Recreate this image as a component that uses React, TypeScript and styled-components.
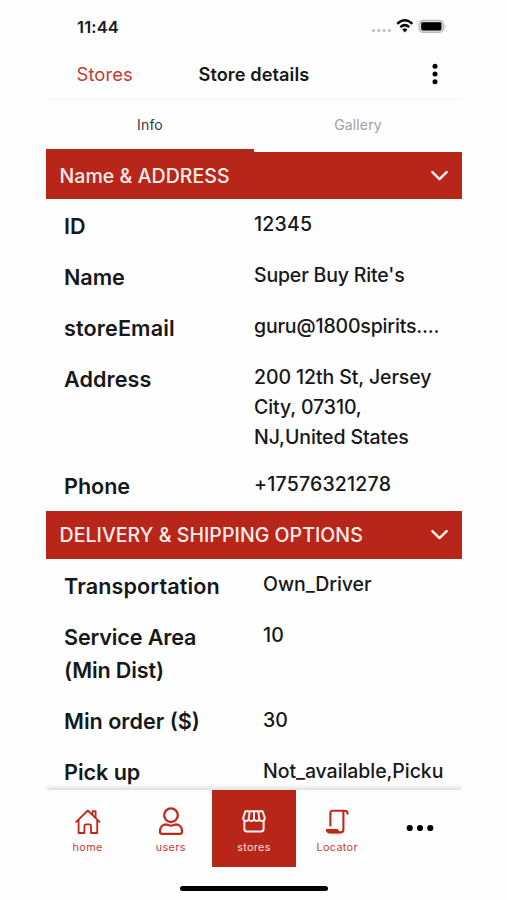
import React from "react";
import styled, { createGlobalStyle } from "styled-components";

const RED = "#b82619";

const Global = createGlobalStyle`
  * { box-sizing: border-box; }
  body { margin: 0; background: #fefefe; font-family: Inter, "Liberation Sans", sans-serif; color: #17181a; }
`;

const Phone = styled.div`
  width: 416px;
  height: 900px;
  margin-left: 46px;
  display: flex;
  flex-direction: column;
  overflow: hidden;
`;

const StatusBar = styled.div`
  height: 50px;
  flex: none;
  display: flex;
  justify-content: space-between;
  align-items: center;
  padding: 3px 16px 0 31px;
`;

const Clock = styled.span`
  font-size: 16.4px;
  font-weight: 600;
  letter-spacing: 0.2px;
`;

const StatusIcons = styled.svg`
  display: block;
`;

const Header = styled.header`
  height: 50px;
  flex: none;
  display: grid;
  grid-template-columns: 122px 1fr 20px;
  align-items: center;
  padding: 0 17px 0 30.5px;
  border-bottom: 2px solid #f8f8f8;
`;

const BackLink = styled.a`
  color: #c43c31;
  font-size: 18.4px;
  letter-spacing: 0.1px;
`;

const Title = styled.h1`
  margin: 0;
  font-size: 18.2px;
  font-weight: 600;
  letter-spacing: 0.07px;
`;

const MenuDots = styled.svg`
  display: block;
  justify-self: center;
`;

const Tabs = styled.div`
  height: 52px;
  flex: none;
  display: flex;
`;

const Tab = styled.button<{ $active?: boolean }>`
  flex: 1;
  border: 0;
  padding: 0;
  background: none;
  font: 400 14px Inter, sans-serif;
  letter-spacing: 0.15px;
  color: ${(p) => (p.$active ? "#37383a" : "#a0a0a0")};
  border-bottom: 3px solid ${(p) => (p.$active ? RED : "transparent")};
`;

const Content = styled.main`
  height: 638px;
  flex: none;
  overflow: hidden;
`;

const SectionHeader = styled.div<{ $height: number }>`
  height: ${(p) => p.$height}px;
  display: flex;
  align-items: center;
  justify-content: space-between;
  padding: 0 13px 0 13.5px;
  background: ${RED};
  color: #fdeeec;
`;

const SectionTitle = styled.h2`
  margin: 0;
  font-size: 19.5px;
  font-weight: 500;
  white-space: nowrap;
  letter-spacing: 0.06px;
`;

const Rows = styled.div`
  padding-top: 1px;
`;

const Row = styled.div<{ $valueIndent?: boolean }>`
  display: grid;
  grid-template-columns: ${(p) => (p.$valueIndent ? 199 : 190)}px 1fr;
  padding: 9px 18px 7px;
`;

const Label = styled.div<{ $spacing: number }>`
  padding: 0.5px 0 1px;
  font-size: 21.6px;
  line-height: 33.5px;
  font-weight: 600;
  white-space: pre-line;
  letter-spacing: ${(p) => p.$spacing}px;
`;

const Value = styled.div<{ $spacing: number }>`
  padding-bottom: 1px;
  font-size: 19.5px;
  line-height: 30px;
  font-weight: 450;
  white-space: pre;
  letter-spacing: ${(p) => p.$spacing}px;
`;

const BottomNav = styled.nav`
  height: 77px;
  flex: none;
  display: grid;
  grid-template-columns: repeat(5, 1fr);
  box-shadow: 0 -2px 5px rgba(0, 0, 0, 0.16);
  clip-path: inset(-8px 0 0 0);
`;

const NavItem = styled.a<{ $active?: boolean }>`
  display: flex;
  flex-direction: column;
  align-items: center;
  padding-top: 16px;
  background: ${(p) => (p.$active ? RED : "#fefefe")};
  color: ${(p) => (p.$active ? "#fff0ee" : "#c0281c")};
`;

const NavLabel = styled.span`
  margin-top: 4.5px;
  font-size: 10.8px;
  line-height: 14px;
  letter-spacing: 0.35px;
  opacity: 0.9;
`;

const HomeArea = styled.div`
  flex: 1;
  display: flex;
  justify-content: center;
  padding-top: 18.5px;
`;

const HomeIndicator = styled.div`
  width: 148px;
  height: 5.5px;
  border-radius: 3px;
  background: #000;
`;

const Icon = styled.svg`
  display: block;
  fill: none;
  stroke: currentColor;
  stroke-width: 2.3;
  stroke-linecap: round;
  stroke-linejoin: round;
`;

const Chevron = () => (
  <Icon width="19" height="12" viewBox="0 0 19 12">
    <path d="M2.4 2.2 9.5 9.2 16.6 2.2" strokeWidth="2.5" />
  </Icon>
);

const HomeIcon = () => (
  <Icon width="28" height="30" viewBox="0 0 28 30">
    <path
      d="M2.2 15.8 13.8 4.5 25.6 15.8M4.6 14V27H10.4V19.8Q10.4 18.4 11.8 18.4H15.6Q17 18.4 17 19.8V27H23.2V14M18.6 8V5.2H21.6V11"
      strokeWidth="1.8"
    />
  </Icon>
);

const UserIcon = () => (
  <Icon width="28" height="30" viewBox="0 0 28 30">
    <circle cx="14" cy="9.2" r="6.8" />
    <path d="M8.9 18.4C5.3 18.7 3 21.4 3 24.7V25.8Q3 27.8 5 27.8H23Q25 27.8 25 25.8V24.7C25 21.4 22.7 18.7 19.1 18.4C17.2 18.4 16.3 19.6 14 19.6C11.7 19.6 10.8 18.4 8.9 18.4Z" />
  </Icon>
);

const StoreIcon = () => (
  <Icon width="28" height="30" viewBox="0 0 28 30">
    <path
      d="M5.4 5.2H22.6L24.8 12C24.8 15.8 19.5 15.8 19.3 12.8C19 15.6 14.3 15.6 14 12.8C13.7 15.6 9 15.6 8.7 12.8C8.5 15.8 3.2 15.8 3.2 12ZM9.7 5.4 8.7 12.8M14 5.4V12.8M18.3 5.4 19.3 12.8M4.4 15V23Q4.4 25.4 6.8 25.4H21.2Q23.6 25.4 23.6 23V15"
      strokeWidth="2"
    />
  </Icon>
);

const LocatorIcon = () => (
  <Icon width="28" height="30" viewBox="0 0 28 30">
    <path d="M7.4 19.4V7Q7.4 4.8 9.6 4.8H21.8Q24.6 4.8 24.6 7.8M20.4 5V23.6Q20.4 26.4 17.8 26.4H6.3" strokeWidth="2.1" />
    <path d="M3.4 23.6H14.6Q15 26.2 17.8 26.6H6.3Q3.4 26.6 3.4 23.6Z" fill="currentColor" strokeWidth="1.2" />
  </Icon>
);

type Entry = { label: string; value: string; ls?: number; vs?: number };

const address: Entry[] = [
  { label: "ID", value: "12345", ls: 0, vs: 0.2 },
  { label: "Name", value: "Super Buy Rite's", ls: -0.05, vs: -0.17 },
  { label: "storeEmail", value: "guru@1800spirits....", ls: 0.12, vs: -0.16 },
  { label: "Address", value: "200 12th St, Jersey\nCity, 07310,\nNJ,United States", ls: 0.08, vs: -0.1 },
  { label: "Phone", value: "+17576321278", ls: -0.05, vs: 0.2 },
];

const delivery: Entry[] = [
  { label: "Transportation", value: "Own_Driver", ls: 0.12, vs: -0.07 },
  { label: "Service Area\n(Min Dist)", value: "10", ls: -0.15, vs: 0.2 },
  { label: "Min order ($)", value: "30", ls: 0, vs: 0 },
  { label: "Pick up", value: "Not_available,Picku", ls: -0.05, vs: -0.07 },
];

type SectionProps = { title: string; height: number; rows: Entry[]; indent?: boolean };

const Section = ({ title, height, rows, indent }: SectionProps) => (
  <section>
    <SectionHeader $height={height}>
      <SectionTitle>{title}</SectionTitle>
      <Chevron />
    </SectionHeader>
    <Rows>
      {rows.map((r) => (
        <Row key={r.label} $valueIndent={indent}>
          <Label $spacing={r.ls ?? 0}>{r.label}</Label>
          <Value $spacing={r.vs ?? 0}>{r.value}</Value>
        </Row>
      ))}
    </Rows>
  </section>
);

export default function App() {
  return (
    <Phone>
      <Global />
      <StatusBar>
        <Clock>11:44</Clock>
        <StatusIcons width="76" height="18" viewBox="0 0 76 18">
          <g fill="#c4c4c4">
            <rect x="2" y="11" width="3" height="3" rx="1" />
            <rect x="7.3" y="11" width="3" height="3" rx="1" />
            <rect x="12.6" y="11" width="3" height="3" rx="1" />
            <rect x="17.9" y="11" width="3" height="3" rx="1" />
          </g>
          <g fill="none" stroke="#0b0b0b" strokeWidth="2.5">
            <path d="M27.2 5.8Q34.8 -1.2 42.4 5.8" />
            <path d="M30.3 9.2Q34.8 5.1 39.3 9.2" />
          </g>
          <path d="M32.2 11.5Q34.8 9.2 37.4 11.5L34.8 14.4Z" fill="#0b0b0b" />
          <rect x="49.1" y="2.3" width="24.4" height="12" rx="3.8" fill="#d8d8d8" stroke="#b8b8b8" strokeWidth="1.2" />
          <rect x="51.2" y="4.2" width="20.2" height="8.2" rx="1.4" fill="#000" />
          <path d="M74.6 6.4Q76.4 8.3 74.6 10.2Z" fill="#b5b5b5" />
        </StatusIcons>
      </StatusBar>
      <Header>
        <BackLink>Stores</BackLink>
        <Title>Store details</Title>
        <MenuDots width="6" height="22" viewBox="0 0 6 22">
          <circle cx="3" cy="3.2" r="2.5" />
          <circle cx="3" cy="11" r="2.5" />
          <circle cx="3" cy="18.8" r="2.5" />
        </MenuDots>
      </Header>
      <Tabs>
        <Tab $active>Info</Tab>
        <Tab>Gallery</Tab>
      </Tabs>
      <Content>
        <Section title="Name & ADDRESS" height={47} rows={address} />
        <Section title="DELIVERY & SHIPPING OPTIONS" height={48} rows={delivery} indent />
      </Content>
      <BottomNav>
        <NavItem>
          <HomeIcon />
          <NavLabel>home</NavLabel>
        </NavItem>
        <NavItem>
          <UserIcon />
          <NavLabel>users</NavLabel>
        </NavItem>
        <NavItem $active>
          <StoreIcon />
          <NavLabel>stores</NavLabel>
        </NavItem>
        <NavItem>
          <LocatorIcon />
          <NavLabel>Locator</NavLabel>
        </NavItem>
        <NavItem>
          <Icon width="30" height="44" viewBox="0 0 30 44">
            <g fill="#000" stroke="none">
              <circle cx="4.7" cy="22" r="3.1" />
              <circle cx="15" cy="22" r="3.1" />
              <circle cx="25.3" cy="22" r="3.1" />
            </g>
          </Icon>
        </NavItem>
      </BottomNav>
      <HomeArea>
        <HomeIndicator />
      </HomeArea>
    </Phone>
  );
}
